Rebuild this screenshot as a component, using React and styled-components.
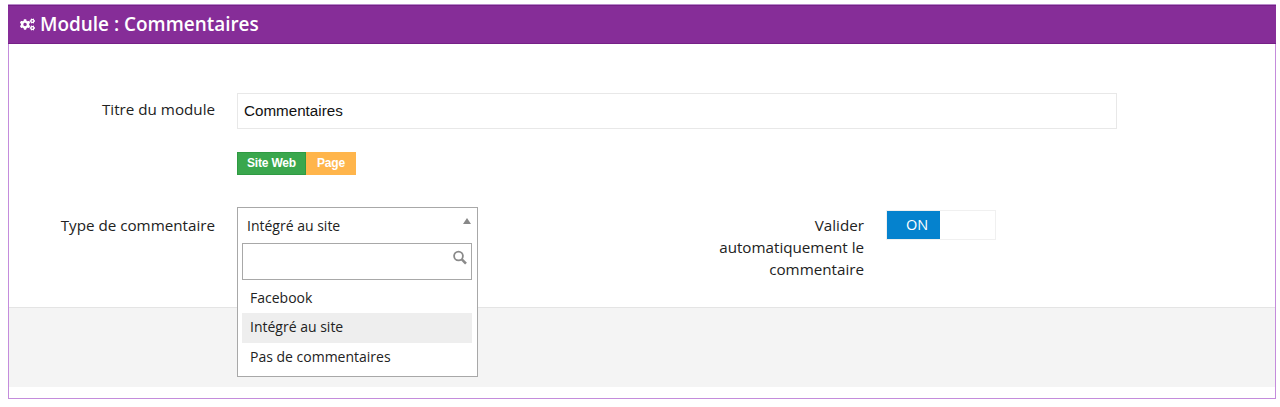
import styled, { createGlobalStyle } from "styled-components";
import { FaCogs } from "react-icons/fa";

const Global = createGlobalStyle`
  html, body { margin: 0; padding: 0; background: #fff; }
  body { font-family: "Open Sans", sans-serif; color: #222; }
`;

const Panel = styled.div`
  box-sizing: border-box;
  width: 1268px;
  height: 395px;
  margin: 4px 0 0 8px;
  border: 1px solid #c48cdc;
  border-top-color: #b98acb;
  display: flex;
  flex-direction: column;
`;

const Header = styled.div`
  box-sizing: border-box;
  height: 39px;
  margin: 0 -1px;
  background: #862d98;
  border-top: 1px solid #752087;
  border-bottom: 1px solid #752087;
  color: #fff;
  display: flex;
  align-items: center;
  gap: 5px;
  padding: 0 0 1px 12px;
  font-size: 18.95px;
  font-weight: 600;
  svg { width: 15px; height: 13px; }
`;

const Body = styled.div`
  height: 263px;
  box-sizing: border-box;
  padding-top: 49px;
`;

const Row = styled.div`
  display: flex;
  align-items: flex-start;
`;

const Label = styled.label`
  width: ${(p) => p.$width}px;
  flex: none;
  box-sizing: border-box;
  text-align: right;
  font-size: 15.2px;
  line-height: 22px;
  color: #222;
  padding-top: ${(p) => p.$top}px;
`;

const TextInput = styled.div`
  box-sizing: border-box;
  width: 880px;
  height: 36px;
  margin-left: 22px;
  border: 1px solid #e8e8e8;
  padding-left: 6px;
  font-family: "Liberation Sans", sans-serif;
  font-size: 15.2px;
  line-height: 34px;
  color: #111;
`;

const Badges = styled.div`
  display: flex;
  margin: 23px 0 32px 228px;
  height: 23px;
`;

const Badge = styled.span`
  box-sizing: border-box;
  height: 23px;
  width: ${(p) => p.$width}px;
  background: ${(p) => p.$color};
  border: 1px solid ${(p) => p.$edge};
  color: #fff;
  font-family: "Liberation Sans", sans-serif;
  font-size: 12px;
  font-weight: 700;
  letter-spacing: -0.2px;
  line-height: 20px;
  text-align: center;
`;

const SelectWrap = styled.div`
  position: relative;
  width: 240px;
  height: 36px;
  margin-left: 22px;
  flex: none;
`;

const Dropdown = styled.div`
  position: absolute;
  z-index: 2;
  top: 0;
  left: 0;
  width: 241px;
  height: 170px;
  box-sizing: border-box;
  background: #fff;
  border: 1px solid #a8a8a8;
  font-size: 14px;
  color: #222;
`;

const Current = styled.div`
  position: relative;
  height: 35px;
  line-height: 35px;
  padding-left: 9px;
`;

const Caret = styled.span`
  position: absolute;
  top: 10px;
  right: 6px;
  border-left: 4px solid transparent;
  border-right: 4px solid transparent;
  border-bottom: 6px solid #888;
`;

const SearchBox = styled.div`
  box-sizing: border-box;
  position: relative;
  height: 37px;
  margin: 0 5px 4px 4px;
  border: 1px solid #a8a8a8;
  svg { position: absolute; top: 6px; right: 3px; }
`;

const Option = styled.div`
  height: 29.3px;
  line-height: 28px;
  margin: 0 5px 0 4px;
  padding-left: 8px;
  background: ${(p) => (p.$active ? "#eeeeee" : "transparent")};
`;

const Toggle = styled.div`
  box-sizing: border-box;
  width: 110px;
  height: 30px;
  margin: 3px 0 0 22px;
  border: 1px solid #f0f0f0;
  flex: none;
`;

const ToggleOn = styled.div`
  box-sizing: border-box;
  width: 53px;
  height: 28px;
  padding-left: 7px;
  background: #0582ce;
  color: #fff;
  font-size: 14.5px;
  line-height: 27px;
  text-align: center;
`;

const Footer = styled.div`
  height: 80px;
  box-sizing: border-box;
  background: #f4f4f4;
  border-top: 1px solid #e4e4e4;
`;

export default function App() {
  return (
    <>
      <Global />
      <Panel>
        <Header>
          <FaCogs />
          <span>Module : Commentaires</span>
        </Header>
        <Body>
          <Row>
            <Label $width={206} $top={5}>Titre du module</Label>
            <TextInput>Commentaires</TextInput>
          </Row>
          <Badges>
            <Badge $width={69} $color="#3aa74d" $edge="#2f9a42">Site Web</Badge>
            <Badge $width={50} $color="#ffb54b" $edge="#ffb54b">Page</Badge>
          </Badges>
          <Row>
            <Label $width={206} $top={7}>Type de commentaire</Label>
            <SelectWrap>
              <Dropdown>
                <Current>
                  Intégré au site
                  <Caret />
                </Current>
                <SearchBox>
                  <svg width="16" height="16" viewBox="0 0 16 16" fill="none" stroke="#8a8a8a">
                    <circle cx="6.5" cy="6" r="4.4" strokeWidth="1.8" />
                    <path d="M9.8 9.4 14 13.6" strokeWidth="2.6" />
                  </svg>
                </SearchBox>
                <Option>Facebook</Option>
                <Option $active>Intégré au site</Option>
                <Option>Pas de commentaires</Option>
              </Dropdown>
            </SelectWrap>
            <Label $width={387} $top={7}>Valider<br />automatiquement le<br />commentaire</Label>
            <Toggle>
              <ToggleOn>ON</ToggleOn>
            </Toggle>
          </Row>
        </Body>
        <Footer />
      </Panel>
    </>
  );
}
